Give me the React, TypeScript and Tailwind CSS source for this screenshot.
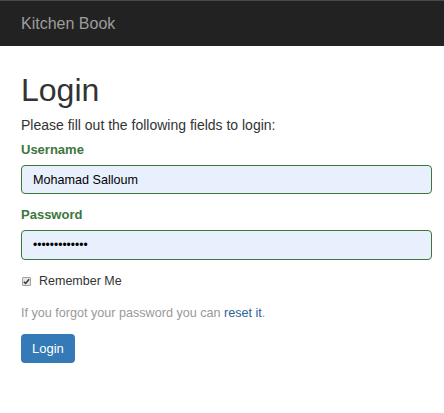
export default function App() {
  return (
    <div className="min-h-[413px] w-[444px] bg-white font-['Liberation_Sans',Arial,sans-serif] text-[#333]">
      {/* Navbar */}
      <div className="flex h-[46px] items-center border-t border-[#4a4a4a] bg-[#222] px-[21px]">
        <span className="text-[16px] text-[#9d9d9d]">Kitchen Book</span>
      </div>

      <div className="pl-[21px] pr-[12px]">
        <h1 className="mt-[26px] text-[32px] leading-[36px]">Login</h1>
        <p className="mt-[8px] text-[14px] leading-[18px]">Please fill out the following fields to login:</p>

        <div className="mt-[7px]">
          <label className="block text-[13px] font-bold leading-[18px] text-[#3c763d]">Username</label>
          <input
            className="mt-[6px] block h-[29px] w-full rounded-[4px] border border-[#3c763d] bg-[#e8f0fe] px-[11px] text-[12.6px] text-black outline-none"
            defaultValue="Mohamad Salloum"
          />
        </div>

        <div className="mt-[12px]">
          <label className="block text-[13px] font-bold leading-[18px] text-[#3c763d]">Password</label>
          <input
            type="password"
            className="mt-[6px] block h-[30px] w-full rounded-[4px] border border-[#3c763d] bg-[#e8f0fe] px-[11px] text-[12px] text-black outline-none"
            defaultValue="mohamad123456"
          />
        </div>

        <label className="mt-[12px] flex h-[18px] items-center gap-[8px]">
          <span className="ml-[1px] flex h-[9px] w-[9px] items-center justify-center rounded-[1px] border border-[#a0a0a0] bg-[#e6e6e6]">
            <svg viewBox="0 0 8 8" className="h-[7px] w-[7px]">
              <path d="M1 4.2 L3 6.2 L7 1.5" fill="none" stroke="#333" strokeWidth="1.6" />
            </svg>
          </span>
          <span className="text-[12.5px] leading-[18px]">Remember Me</span>
        </label>

        <p className="mt-[14px] text-[12.6px] leading-[18px] text-[#999]">
          If you forgot your password you can <a className="text-[#2a6496]">reset it</a>.
        </p>

        <button className="mt-[12px] h-[29px] rounded-[4px] bg-[#337ab7] px-[11px] text-[13px] text-white">
          Login
        </button>
      </div>
    </div>
  )
}
